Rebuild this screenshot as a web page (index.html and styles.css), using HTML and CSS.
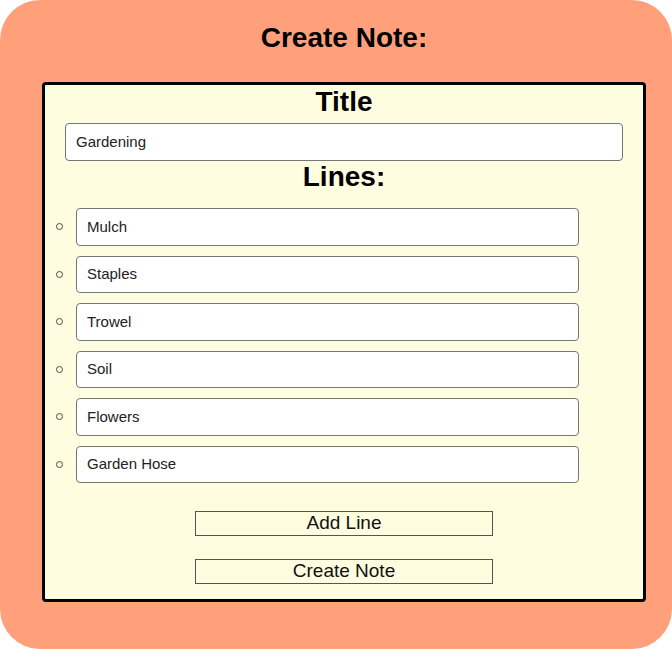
FILE: index.html
```html
<!DOCTYPE html>
<html>
<head>
<meta charset="utf-8">
<link rel="stylesheet" href="styles.css">
</head>
<body>
<div class="page">
  <h1 class="heading">Create Note:</h1>
  <div class="card">
    <h2 class="section">Title</h2>
    <input class="field title-field" type="text" value="Gardening">
    <h2 class="section">Lines:</h2>
    <ul class="lines">
      <li class="line"><input class="field line-field" type="text" value="Mulch"></li>
      <li class="line"><input class="field line-field" type="text" value="Staples"></li>
      <li class="line"><input class="field line-field" type="text" value="Trowel"></li>
      <li class="line"><input class="field line-field" type="text" value="Soil"></li>
      <li class="line"><input class="field line-field" type="text" value="Flowers"></li>
      <li class="line"><input class="field line-field" type="text" value="Garden Hose"></li>
    </ul>
    <div class="actions">
      <button class="btn" type="button">Add Line</button>
      <button class="btn" type="button">Create Note</button>
    </div>
  </div>
</div>
</body>
</html>
```
FILE: styles.css
```css
html, body {
  margin: 0;
  padding: 0;
  background: #ffffff;
  overflow: hidden;
}

.page {
  width: 672px;
  height: 649px;
  box-sizing: border-box;
  background: #ffa07a;
  border-radius: 40px;
  padding: 22px 0 0 16px;
  font-family: "Liberation Sans", Arial, sans-serif;
}

.heading {
  margin: 0;
  font-size: 28px;
  line-height: 32px;
  font-weight: bold;
  text-align: center;
  color: #000;
}

.card {
  margin: 28px 26px 0 26px;
  border: 3px solid #000;
  border-radius: 4px;
  background: #fffddf;
  padding: 0 0 15px 0;
  display: flex;
  flex-direction: column;
}

.section {
  margin: 0;
  font-size: 28px;
  line-height: 32px;
  font-weight: bold;
  text-align: center;
  color: #000;
}

.section:first-child {
  margin-top: 1px;
}

.field {
  box-sizing: border-box;
  border: 1px solid #767676;
  border-radius: 4px;
  background: #fff;
  font-family: "Liberation Sans", Arial, sans-serif;
  font-size: 15px;
  color: #222;
  padding: 0 10px 1px 10px;
  margin: 0;
  outline: none;
}

.title-field {
  margin: 5px 20px 0 20px;
  height: 38px;
}

.lines {
  list-style: none;
  margin: 15px 0 0 0;
  padding: 0 0 0 11px;
  display: flex;
  flex-direction: column;
  gap: 10px;
}

.line {
  display: flex;
  align-items: center;
  gap: 13px;
}

.line::before {
  content: "";
  width: 7px;
  height: 7px;
  box-sizing: border-box;
  border: 1.6px solid #4a4a4a;
  border-radius: 50%;
  flex: none;
}

.line-field {
  width: 503px;
  height: 37.5px;
}

.actions {
  margin-top: 28px;
  display: flex;
  flex-direction: column;
  align-items: center;
  gap: 23px;
}

.btn {
  width: 298px;
  height: 25px;
  box-sizing: border-box;
  border: 1px solid #555;
  background: transparent;
  font-family: "Liberation Sans", Arial, sans-serif;
  font-size: 19px;
  line-height: 21px;
  color: #111;
  padding: 0 0 2px 0;
  margin: 0;
}
```
